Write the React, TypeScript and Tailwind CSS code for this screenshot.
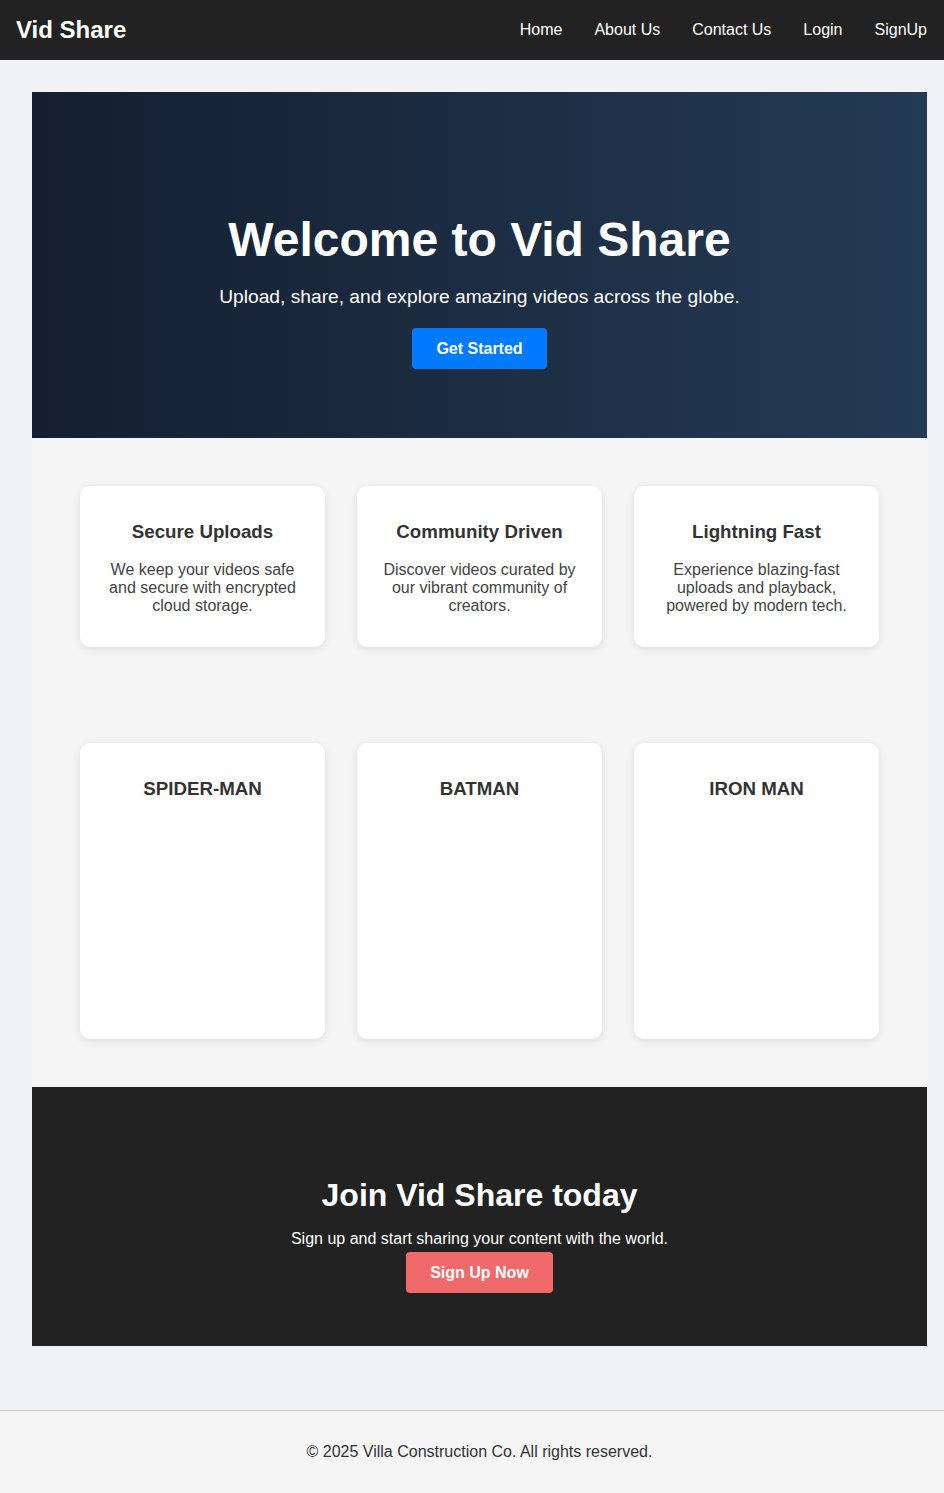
import React from "react";

const features = [
  { title: "Secure Uploads", text: "We keep your videos safe and secure with encrypted cloud storage." },
  { title: "Community Driven", text: "Discover videos curated by our vibrant community of creators." },
  { title: "Lightning Fast", text: "Experience blazing-fast uploads and playback, powered by modern tech." },
];

const movies = ["SPIDER-MAN", "BATMAN", "IRON MAN"];

export default function App() {
  return (
    <div className="min-h-[1493px] bg-[#f0f2f5] font-['Liberation_Sans',Arial,sans-serif] text-[#333]">
      <nav className="h-[60px] bg-[#222] flex items-center justify-between pl-4 pr-[17px]">
        <div className="text-white font-bold text-[24px]">Vid Share</div>
        <div className="flex gap-8 text-white text-[16px]">
          <span>Home</span>
          <span>About Us</span>
          <span>Contact Us</span>
          <span>Login</span>
          <span>SignUp</span>
        </div>
      </nav>

      <main className="ml-8 mr-[17px] pt-8">
        <section className="bg-[linear-gradient(to_right,#141e30,#243b55)] pt-[120px] pb-[69px] flex flex-col items-center text-white text-center">
          <h1 className="text-[48px] leading-[55px] font-bold">Welcome to Vid Share</h1>
          <p className="mt-[19px] text-[19.2px] leading-[22px]">Upload, share, and explore amazing videos across the globe.</p>
          <button className="mt-[20px] h-[41px] w-[135px] bg-[#007bff] rounded-[4px] text-white font-bold text-[16px]">Get Started</button>
        </section>

        <section className="bg-[#f5f5f5] p-12 grid grid-cols-3 gap-8">
          {features.map((f) => (
            <div key={f.title} className="bg-white rounded-[10px] shadow-[0_2px_8px_rgba(0,0,0,0.1)] px-4 pt-[35px] pb-[32px] text-center">
              <h3 className="text-[18.72px] leading-[22px] font-bold text-[#333]">{f.title}</h3>
              <p className="mt-[18px] text-[16px] leading-[18px] text-[#444]">{f.text}</p>
            </div>
          ))}
        </section>

        <section className="bg-[#f5f5f5] p-12 grid grid-cols-3 gap-8">
          {movies.map((m) => (
            <div key={m} className="bg-white rounded-[10px] shadow-[0_2px_8px_rgba(0,0,0,0.1)] h-[296px] px-4 pt-[35px] text-center">
              <h3 className="text-[18.72px] leading-[22px] font-bold text-[#333]">{m}</h3>
            </div>
          ))}
        </section>

        <section className="bg-[#222] text-white flex flex-col items-center text-center pt-[90px] pb-[53px]">
          <h2 className="text-[32px] leading-[37px] font-bold">Join Vid Share today</h2>
          <p className="mt-[16px] text-[16px] leading-[18px]">Sign up and start sharing your content with the world.</p>
          <button className="mt-[4px] h-[41px] w-[147px] bg-[#f0696b] rounded-[4px] text-white font-bold text-[16px]">Sign Up Now</button>
        </section>
      </main>

      <footer className="mt-16 border-t border-[#ccc] bg-[#f5f5f5] h-[83px] flex items-center justify-center pl-8 pr-[17px] text-[16px] text-[#333]">
        © 2025 Villa Construction Co. All rights reserved.
      </footer>
    </div>
  );
}
